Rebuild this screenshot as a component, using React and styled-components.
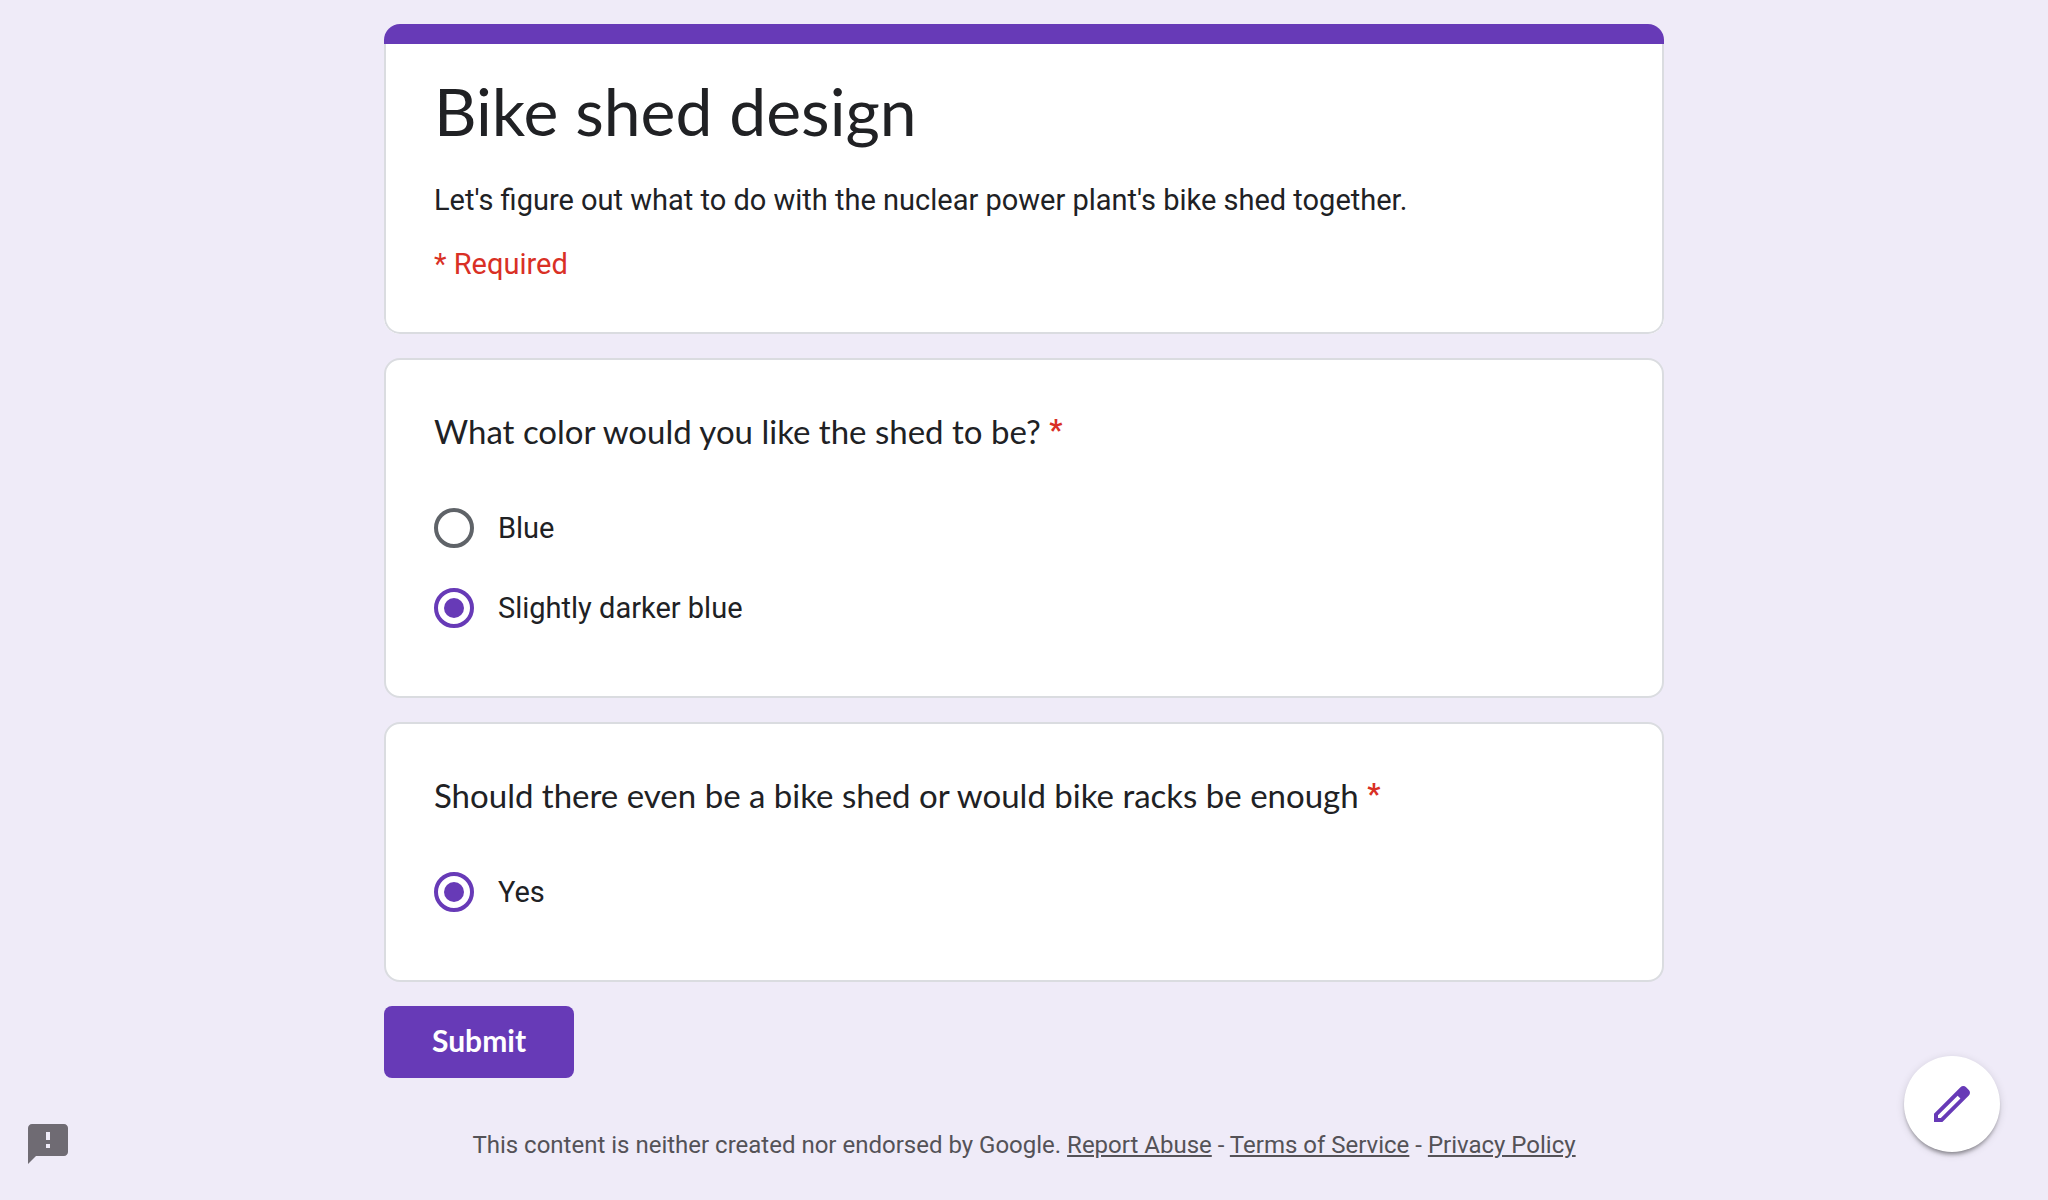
import React from "react";
import styled, { createGlobalStyle } from "styled-components";

const PURPLE = "#673ab7";
const INK = "#202124";
const RED = "#d93025";
const HEADING_FONT = 'Lato, "Open Sans", sans-serif';
const BODY_FONT = 'Roboto, "Liberation Sans", sans-serif';

const GlobalStyle = createGlobalStyle`
  *, *::before, *::after { box-sizing: border-box; }
  body {
    margin: 0;
    background: #efebf8;
    color: ${INK};
    font-family: ${BODY_FONT};
    -webkit-font-smoothing: antialiased;
  }
`;

const Page = styled.main`
  width: 100%;
  max-width: 1280px;
  margin: 0 auto;
  padding: 24px 0;
`;

const Form = styled.form`
  display: flex;
  flex-direction: column;
  align-items: flex-start;
  gap: 24px;
`;

const Card = styled.section`
  width: 100%;
  padding: 48px;
  background: #fff;
  border: 2px solid #dadce0;
  border-radius: 16px;
`;

const HeaderCard = styled.header`
  width: 100%;
  overflow: hidden;
  border-radius: 16px;
  background: #fff;
`;

const Accent = styled.div`
  height: 20px;
  background: ${PURPLE};
`;

const HeaderBody = styled.div`
  padding: 24px 48px 48px;
  border: 2px solid #dadce0;
  border-top: 0;
  border-radius: 0 0 16px 16px;
`;

const Title = styled.h1`
  margin: 0;
  font: 400 66px/86px ${HEADING_FONT};
`;

const Description = styled.p`
  margin: 26px 0 24px;
  font-size: 29px;
  line-height: 40px;
`;

const RequiredNote = styled.p`
  margin: 0;
  font-size: 29px;
  line-height: 40px;
  color: ${RED};
`;

const QuestionTitle = styled.h2`
  margin: 0 0 34px;
  font: 400 33px/46px ${HEADING_FONT};
`;

const Asterisk = styled.span`
  color: ${RED};
  font-family: ${BODY_FONT};
  font-size: 29px;
  font-weight: 700;
  line-height: 24px;
  vertical-align: 4px;
`;

const Option = styled.label`
  display: flex;
  align-items: center;
  gap: 24px;
  height: 80px;
  font-size: 29px;
  cursor: pointer;
`;

const Radio = styled.input`
  appearance: none;
  display: grid;
  place-items: center;
  width: 40px;
  height: 40px;
  margin: 0;
  border: 4px solid #5f6368;
  border-radius: 50%;
  cursor: pointer;

  &:checked { border-color: ${PURPLE}; }
  &:checked::before {
    content: "";
    width: 20px;
    height: 20px;
    border-radius: 50%;
    background: ${PURPLE};
  }
`;

const Submit = styled.button`
  height: 72px;
  padding: 0 48px 4px;
  border: 0;
  border-radius: 8px;
  background: ${PURPLE};
  color: #fff;
  font: 700 30px/40px ${HEADING_FONT};
  cursor: pointer;
`;

const Footer = styled.footer`
  margin-top: 48px;
  font-size: 24px;
  line-height: 38px;
  text-align: center;
  color: #545257;
`;

const FooterLink = styled.a`
  color: inherit;
  text-decoration: underline;
`;

const EditButton = styled.button`
  position: fixed;
  right: 48px;
  bottom: 48px;
  display: grid;
  place-items: center;
  width: 96px;
  height: 96px;
  padding: 0;
  border: 0;
  border-radius: 50%;
  background: #fff;
  color: ${PURPLE};
  box-shadow: 0 4px 4px -2px rgba(0, 0, 0, 0.4), 0 2px 8px rgba(0, 0, 0, 0.14);
  cursor: pointer;
`;

const FeedbackButton = styled.button`
  position: fixed;
  left: 24px;
  bottom: 32px;
  display: flex;
  padding: 0;
  border: 0;
  background: none;
  color: #6f6b73;
  cursor: pointer;
`;

const Icon = ({ path }) => (
  <svg width="48" height="48" viewBox="0 0 24 24" fill="currentColor" aria-hidden="true">
    <path d={path} />
  </svg>
);

const PENCIL =
  "M20.41 4.94l-1.35-1.35c-.78-.78-2.05-.78-2.83 0L3 16.82V21h4.18L20.41 7.77c.79-.78.79-2.05 0-2.83zm-14 14.12L5 19v-1.36l9.82-9.82 1.41 1.41-9.82 9.83z";
const FEEDBACK =
  "M20 2H4c-1.1 0-1.99.9-1.99 2L2 22l4-4h14c1.1 0 2-.9 2-2V4c0-1.1-.9-2-2-2zm-7 12h-2v-2h2v2zm0-4h-2V6h2v4z";

const QUESTIONS = [
  {
    id: "color",
    title: "What color would you like the shed to be?",
    options: ["Blue", "Slightly darker blue"],
    selected: "Slightly darker blue",
  },
  {
    id: "shed",
    title: "Should there even be a bike shed or would bike racks be enough",
    options: ["Yes"],
    selected: "Yes",
  },
];

function Question({ id, title, options, selected }) {
  return (
    <Card role="radiogroup" aria-labelledby={`${id}-title`}>
      <QuestionTitle id={`${id}-title`}>
        {title} <Asterisk>*</Asterisk>
      </QuestionTitle>
      {options.map((option) => (
        <Option key={option}>
          <Radio type="radio" name={id} value={option} defaultChecked={option === selected} />
          {option}
        </Option>
      ))}
    </Card>
  );
}

export default function App() {
  return (
    <>
      <GlobalStyle />
      <Page>
        <Form onSubmit={(event) => event.preventDefault()}>
          <HeaderCard>
            <Accent />
            <HeaderBody>
              <Title>Bike shed design</Title>
              <Description>
                Let's figure out what to do with the nuclear power plant's bike shed together.
              </Description>
              <RequiredNote>* Required</RequiredNote>
            </HeaderBody>
          </HeaderCard>
          {QUESTIONS.map((question) => (
            <Question key={question.id} {...question} />
          ))}
          <Submit type="submit">Submit</Submit>
        </Form>
        <Footer>
          This content is neither created nor endorsed by Google.{" "}
          <FooterLink href="#report">Report Abuse</FooterLink> -{" "}
          <FooterLink href="#terms">Terms of Service</FooterLink> -{" "}
          <FooterLink href="#privacy">Privacy Policy</FooterLink>
        </Footer>
      </Page>
      <FeedbackButton type="button" aria-label="Report a problem">
        <Icon path={FEEDBACK} />
      </FeedbackButton>
      <EditButton type="button" aria-label="Edit this form">
        <Icon path={PENCIL} />
      </EditButton>
    </>
  );
}
